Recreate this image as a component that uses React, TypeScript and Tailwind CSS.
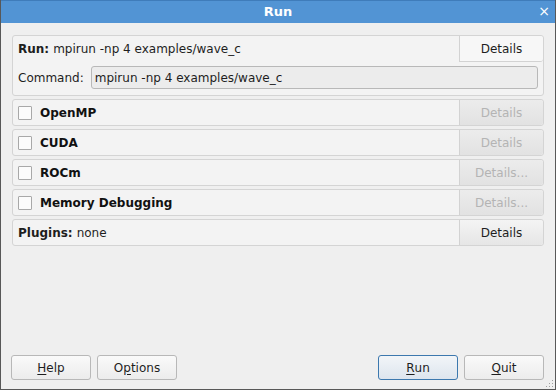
import React from 'react';

const font = { fontFamily: '"DejaVu Sans", "Liberation Sans", sans-serif' };

const DetailsButton: React.FC<{ label?: string; disabled?: boolean; first?: boolean }> = ({
  label = 'Details',
  disabled,
  first,
}) => (
  <div
    className={
      'w-[84px] flex items-center justify-center border-l border-[#d2d2d2] rounded-r-[3px] ' +
      (first
        ? 'h-[26px] bg-[#f7f7f7] border-b'
        : disabled
          ? 'self-stretch bg-gradient-to-b from-[#ececec] to-[#e2e2e2] text-[#b4b4b4]'
          : 'self-stretch bg-gradient-to-b from-[#f4f4f4] to-[#e6e6e6] text-[#1e1e1e]')
    }
  >
    {label}
  </div>
);

const CheckRow: React.FC<{ label: string; details: string }> = ({ label, details }) => (
  <div className="h-[27px] flex border border-[#d4d4d4] rounded-[3px] bg-[#f3f3f3]">
    <div className="flex-1 flex items-center pl-[5px]">
      <div className="w-[14px] h-[14px] border border-[#a8a8a8] bg-[#fbfbfb] rounded-[1px]" />
      <span className="ml-[8px] font-bold text-[#111]">{label}</span>
    </div>
    <DetailsButton label={details} disabled />
  </div>
);

const BottomButton: React.FC<{ children: React.ReactNode; primary?: boolean }> = ({ children, primary }) => (
  <div
    className={
      'w-[80px] h-[25px] flex items-center justify-center rounded-[3px] border ' +
      (primary
        ? 'border-[#3c78ae] bg-gradient-to-b from-[#f2f5f8] to-[#dde5ee]'
        : 'border-[#b8b8b8] bg-gradient-to-b from-[#fafafa] to-[#ececec]')
    }
  >
    {children}
  </div>
);

export default function App() {
  return (
    <div
      className="w-[556px] h-[390px] flex flex-col border border-[#585858] border-t-0 bg-[#efefef] text-[12px] text-[#1e1e1e] overflow-hidden"
      style={font}
    >
      <div className="h-[23px] shrink-0 relative flex items-center justify-center bg-[#5294d4] border-t border-[#3f7cba] -mx-px">
        <span className="text-white font-bold text-[13px]">Run</span>
        <span className="absolute right-[6px] top-[3px] text-white text-[14px] leading-none">×</span>
      </div>

      <div className="flex-1 flex flex-col px-[11px] pt-[12px] pb-[9px]">
        <div className="h-[61px] border border-[#d4d4d4] rounded-[3px] bg-[#f3f3f3] flex flex-col">
          <div className="flex h-[26px]">
            <div className="flex-1 flex items-center pl-[5px]">
              <span className="font-bold">Run:</span>
              <span className="ml-[4px]">mpirun -np 4 examples/wave_c</span>
            </div>
            <DetailsButton first />
          </div>
          <div className="flex items-center pl-[5px] pr-[5px] mt-[4px]">
            <span>Command:</span>
            <div className="ml-[7px] flex-1 h-[23px] flex items-center px-[3px] border border-[#b8b8b8] rounded-[3px] bg-[#ececec]">
              mpirun -np 4 examples/wave_c
            </div>
          </div>
        </div>

        <div className="flex flex-col gap-[3px] mt-[3px]">
          <CheckRow label="OpenMP" details="Details" />
          <CheckRow label="CUDA" details="Details" />
          <CheckRow label="ROCm" details="Details..." />
          <CheckRow label="Memory Debugging" details="Details..." />
          <div className="h-[27px] flex border border-[#d4d4d4] rounded-[3px] bg-[#f3f3f3]">
            <div className="flex-1 flex items-center pl-[5px]">
              <span className="font-bold">Plugins:</span>
              <span className="ml-[4px]">none</span>
            </div>
            <DetailsButton />
          </div>
        </div>

        <div className="flex-1" />

        <div className="flex items-center relative">
          <div className="flex gap-[6px] -ml-px">
            <BottomButton>
              <span className="underline underline-offset-2">H</span>elp
            </BottomButton>
            <BottomButton>
              O<span className="underline underline-offset-2">p</span>tions
            </BottomButton>
          </div>
          <div className="flex-1" />
          <div className="flex gap-[6px]">
            <BottomButton primary>
              <span className="underline underline-offset-2">R</span>un
            </BottomButton>
            <BottomButton>
              <span className="underline underline-offset-2">Q</span>uit
            </BottomButton>
          </div>
          <svg className="absolute right-[-10px] bottom-[-8px]" width="9" height="9" viewBox="0 0 9 9">
            {[
              [7, 1],
              [4, 4],
              [7, 4],
              [1, 7],
              [4, 7],
              [7, 7],
            ].map(([x, y], i) => (
              <rect key={i} x={x} y={y} width="1" height="1" fill="#a0a0a0" />
            ))}
          </svg>
        </div>
      </div>
    </div>
  );
}
